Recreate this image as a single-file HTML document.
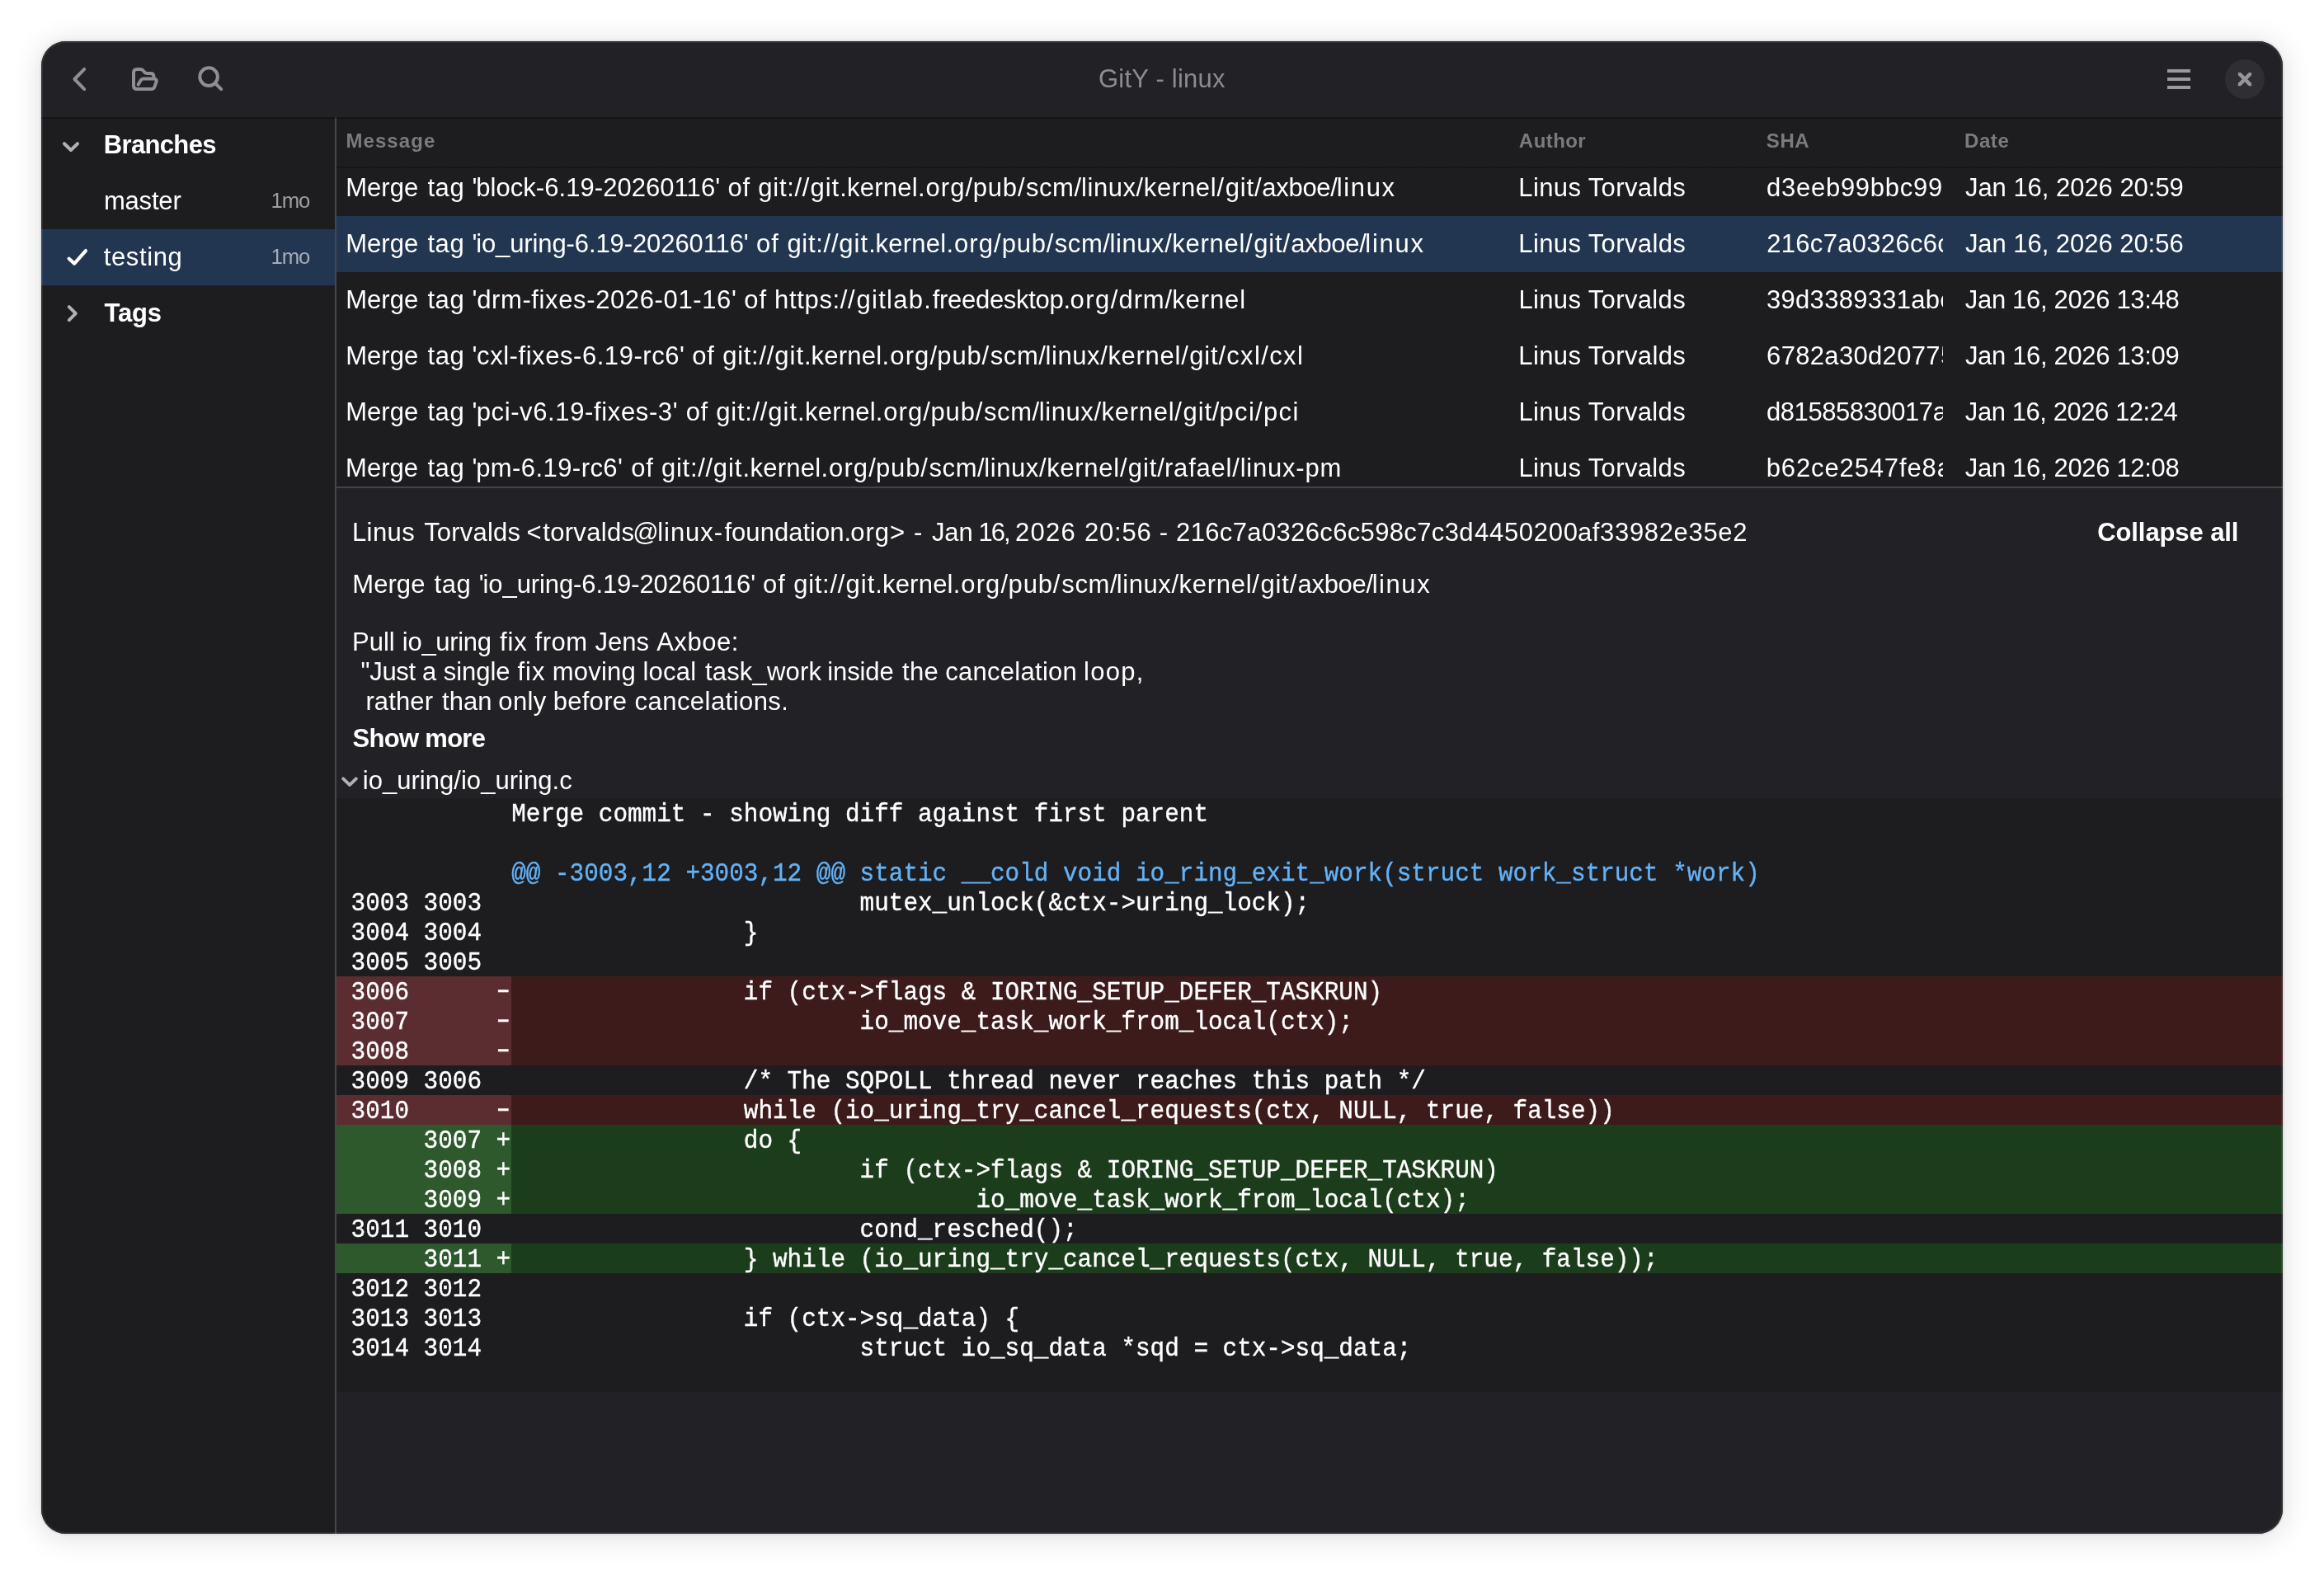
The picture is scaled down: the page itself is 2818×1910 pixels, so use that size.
<!DOCTYPE html>
<html lang="en">
<head>
<meta charset="utf-8">
<title>GitY - linux</title>
<style>
html,body{margin:0;padding:0;}
body{width:2818px;height:1910px;background:#fff;position:relative;overflow:hidden;font-family:'Liberation Sans',sans-serif;}
#win{position:absolute;left:50px;top:50px;width:2718px;height:1810px;background:#222226;}
#shadow{position:absolute;left:50px;top:50px;width:2718px;height:1810px;border-radius:30px;
 box-shadow:0 3px 34px 2px rgba(0,0,0,.13),0 0 0 2px rgba(0,0,0,.05);}
#clipper{position:absolute;left:0;top:0;width:2818px;height:1910px;clip-path:inset(50px 50px 50px 50px round 30px);}
#rim{position:absolute;left:50px;top:50px;width:2718px;height:1810px;border-radius:30px;box-shadow:inset 0 0 0 2px rgba(255,255,255,.07);pointer-events:none;}
.abs{position:absolute;}
#tx{position:absolute;left:0;top:0;width:2818px;height:1910px;will-change:transform;}
.t{position:absolute;white-space:pre;line-height:36px;}
.clip{position:absolute;overflow:hidden;}
#header{position:absolute;left:50px;top:50px;width:2718px;height:92px;background:#222226;}
#sidebar{position:absolute;left:50px;top:142px;width:356px;height:1718px;background:#1d1d20;}
#vsep{position:absolute;left:406px;top:142px;width:2px;height:1718px;background:#47474b;}
#list{position:absolute;left:408px;top:142px;width:2360px;height:448px;background:#1d1d20;}
#hsep{position:absolute;left:408px;top:590px;width:2360px;height:2px;background:#444449;}
#details{position:absolute;left:408px;top:592px;width:2360px;height:1268px;background:#222226;}
.sel{position:absolute;background:#233651;}
.shade{position:absolute;height:3px;background:linear-gradient(rgba(0,0,0,.26),rgba(0,0,0,.26) 66%,rgba(0,0,0,.05) 67%,rgba(0,0,0,.05));}
#diff{position:absolute;left:408px;top:968px;width:2360px;height:720px;background:#1d1d20;font-family:'Liberation Mono',monospace;font-size:29.33px;color:#fff;}
#dtx{will-change:transform;-webkit-text-stroke:0.35px;}
.dl{height:36px;line-height:36px;white-space:pre;position:relative;}
.dl .gb{position:absolute;left:0;top:0;width:212px;height:36px;}
.dl .g{display:inline-block;width:211.2px;height:36px;vertical-align:top;transform:translateY(3px) scaleY(1.1);transform-origin:0 25px;}
.dl .c{display:inline-block;margin-left:1px;height:36px;vertical-align:top;transform:translateY(3px) scaleY(1.1);transform-origin:0 25px;}
.dl.rm{background:#3d1b1a;} .dl.rm .gb{background:#5c2d30;}
.dl.ad{background:#1b3d1b;} .dl.ad .gb{background:#2d592d;}
.dl.hk .c{color:#64b2f5;}
.dl .g b{font-weight:400;display:inline-block;transform:translate(-0.5px,-1.5px) scaleX(1.5);}
svg{position:absolute;overflow:visible;}
</style>
</head>
<body>
<div id="shadow"></div>
<div id="clipper">
<div id="win"></div>
<div id="header"></div>
<div id="sidebar"></div>
<div id="list"></div>
<div id="details"></div>
<div id="vsep"></div>
<div id="hsep"></div>
<!-- selection -->
<div class="sel" style="left:50px;top:278px;width:356px;height:68px"></div>
<div class="sel" style="left:408px;top:262px;width:2360px;height:68px"></div>
<!-- column header strip covers scrolled rows -->
<div class="abs" style="left:408px;top:142px;width:2360px;height:60px;background:#1d1d20"></div>
<div class="shade" style="left:50px;top:142px;width:2718px"></div>
<div class="shade" style="left:408px;top:202px;width:2360px"></div>

<!-- icons -->
<svg id="icons" width="2818" height="1910" viewBox="0 0 2818 1910" style="left:0;top:0" fill="none" stroke-linecap="round" stroke-linejoin="round">
 <g stroke="#8f8f92" stroke-width="4">
  <path d="M102.2 83.9 L90.4 96 L102.2 108.1"/>
  <path d="M167.6 102.6 L170.6 97.4 Q171.8 95.5 174 95.5 L186.6 95.5 Q190.6 95.5 189.6 99.2 L187.4 105.4 Q186.4 108 183.6 108 L166 108 Q162 108 162 104 L162 88 Q162 84 166 84 L170.6 84 Q172 84 173 85 L175.6 87.8 Q176.6 89 178.2 89 L182.6 89 Q186.4 89 186.4 92.6 L186.4 95.4"/>
  <circle cx="253.1" cy="93.1" r="10.8"/>
  <path d="M260.9 100.9 L268.2 108.2"/>
 </g>
 <g stroke="#9a9a9c" stroke-width="4" stroke-linecap="butt">
  <path d="M2628 86 H2656 M2628 96 H2656 M2628 106 H2656"/>
 </g>
 <circle cx="2722" cy="96" r="24" fill="#2f2f33" stroke="none"/>
 <clipPath id="xc"><rect x="2713.8" y="87.9" width="16.3" height="16.3"/></clipPath>
 <path clip-path="url(#xc)" d="M2710 84.1 L2734 108.1 M2734 84.1 L2710 108.1" stroke="#969698" stroke-width="4.6" stroke-linecap="butt"/>
 <!-- sidebar chevrons / check -->
 <path d="M78 174.2 L86 182 L94 174.2" stroke="#b1b1b3" stroke-width="4"/>
 <path d="M83.8 372.2 L91.8 380.2 L83.8 388.2" stroke="#b1b1b3" stroke-width="4"/>
 <path d="M83.7 313.7 L90.2 319.6 L103.9 304.1" stroke="#ffffff" stroke-width="4.2"/>
 <!-- file expander chevron -->
 <path d="M416.2 944.4 L424 951.9 L431.8 944.4" stroke="#b1b1b3" stroke-width="4"/>
</svg>
<div id="tx">
<span class='t' id='t0' style="left:1331.99px;top:78.00px;font-size:31px;letter-spacing:0.223px;color:#8c8c8f;">GitY - linux</span>
<span class='t' id='t1' style="left:125.75px;top:158.00px;font-size:31px;letter-spacing:-0.650px;color:#fff;font-weight:700;">Branches</span>
<span class='t' id='t2' style="left:125.93px;top:226.00px;font-size:31px;letter-spacing:-0.183px;color:#fff;">master</span>
<span class='t' id='t3' style="left:328.59px;top:225.00px;font-size:25.8px;letter-spacing:-1.249px;color:#9d9d9f;">1mo</span>
<span class='t' id='t4' style="left:125.75px;top:294.00px;font-size:31px;letter-spacing:0.607px;color:#fff;">testing</span>
<span class='t' id='t5' style="left:328.59px;top:293.00px;font-size:25.8px;letter-spacing:-1.245px;color:#a7abb3;">1mo</span>
<span class='t' id='t6' style="left:126.62px;top:362.00px;font-size:31px;letter-spacing:-0.254px;color:#fff;font-weight:700;">Tags</span>
<span class='t' id='t7' style="left:419.42px;top:153.00px;font-size:24px;letter-spacing:1.074px;color:#7b7b7d;font-weight:700;">Message</span>
<span class='t' id='t8' style="left:1841.86px;top:153.00px;font-size:24px;letter-spacing:0.440px;color:#7b7b7d;font-weight:700;">Author</span>
<span class='t' id='t9' style="left:2141.82px;top:153.00px;font-size:24px;letter-spacing:0.588px;color:#7b7b7d;font-weight:700;">SHA</span>
<span class='t' id='t10' style="left:2382.10px;top:153.00px;font-size:24px;letter-spacing:0.541px;color:#7b7b7d;font-weight:700;">Date</span>
<div class='t ln' style="left:419.20px;top:210.00px;font-size:31px;color:#fff;"><span class='s' id='t11' style="letter-spacing:0.036px;">Merge </span><span class='s' id='t12' style="letter-spacing:0.612px;margin-left:2.51px;">tag '</span><span class='s' id='t13' style="letter-spacing:0.056px;margin-left:-1.92px;">block-6.19-20260116' </span><span class='s' id='t14' style="letter-spacing:0.810px;margin-left:0.59px;">of </span><span class='s' id='t15' style="letter-spacing:0.718px;margin-left:-0.04px;">git://</span><span class='s' id='t16' style="letter-spacing:1.035px;margin-left:0.23px;">git.</span><span class='s' id='t17' style="letter-spacing:0.236px;margin-left:-0.87px;">kernel.</span><span class='s' id='t18' style="letter-spacing:1.095px;margin-left:0.70px;">org/</span><span class='s' id='t19' style="letter-spacing:0.839px;margin-left:-0.62px;">pub/</span><span class='s' id='t20' style="letter-spacing:0.566px;margin-left:0.63px;">scm/</span><span class='s' id='t21' style="letter-spacing:0.571px;margin-left:-0.71px;">linux/</span><span class='s' id='t22' style="letter-spacing:0.722px;margin-left:-0.14px;">kernel/</span><span class='s' id='t23' style="letter-spacing:0.860px;margin-left:0.91px;">git/</span><span class='s' id='t24' style="letter-spacing:-0.313px;margin-left:-0.12px;">axboe/</span><span class='s' id='t25' style="letter-spacing:1.624px;margin-left:-0.73px;">linux</span></div>
<span class='t' id='t26' style="left:1841.36px;top:210.00px;font-size:31px;letter-spacing:0.369px;color:#fff;">Linus Torvalds</span>
<div class='clip' style='left:2131px;top:210.00px;width:225px;height:36px'><span class='t' id='t27' style="left:11.02px;top:0;font-size:31px;letter-spacing:0.732px;color:#fff;">d3eeb99bbc99<span class='sfx'>e</span></span></div>
<span class='t' id='t28' style="left:2382.91px;top:210.00px;font-size:31px;letter-spacing:-0.031px;color:#fff;">Jan 16, 2026 20:59</span>
<div class='t ln' style="left:419.20px;top:278.00px;font-size:31px;color:#fff;"><span class='s' id='t29' style="letter-spacing:0.036px;">Merge </span><span class='s' id='t30' style="letter-spacing:0.612px;margin-left:2.51px;">tag '</span><span class='s' id='t31' style="letter-spacing:-0.102px;margin-left:-1.96px;">io_uring-6.19-20260116' </span><span class='s' id='t32' style="letter-spacing:0.910px;margin-left:0.96px;">of </span><span class='s' id='t33' style="letter-spacing:0.718px;margin-left:0.10px;">git://</span><span class='s' id='t34' style="letter-spacing:1.035px;margin-left:0.02px;">git.</span><span class='s' id='t35' style="letter-spacing:0.236px;margin-left:-1.26px;">kernel.</span><span class='s' id='t36' style="letter-spacing:1.095px;margin-left:0.75px;">org/</span><span class='s' id='t37' style="letter-spacing:0.839px;margin-left:-0.18px;">pub/</span><span class='s' id='t38' style="letter-spacing:0.566px;margin-left:0.45px;">scm/</span><span class='s' id='t39' style="letter-spacing:0.571px;margin-left:-0.91px;">linux/</span><span class='s' id='t40' style="letter-spacing:0.722px;margin-left:-0.09px;">kernel/</span><span class='s' id='t41' style="letter-spacing:0.860px;margin-left:0.76px;">git/</span><span class='s' id='t42' style="letter-spacing:-0.313px;margin-left:0.33px;">axboe/</span><span class='s' id='t43' style="letter-spacing:1.696px;margin-left:-1.11px;">linux</span></div>
<span class='t' id='t44' style="left:1841.36px;top:278.00px;font-size:31px;letter-spacing:0.369px;color:#fff;">Linus Torvalds</span>
<div class='clip' style='left:2131px;top:278.00px;width:225px;height:36px'><span class='t' id='t45' style="left:11.18px;top:0;font-size:31px;letter-spacing:0.309px;color:#fff;">216c7a0326c6<span class='sfx'>c</span></span></div>
<span class='t' id='t46' style="left:2382.91px;top:278.00px;font-size:31px;letter-spacing:-0.043px;color:#fff;">Jan 16, 2026 20:56</span>
<div class='t ln' style="left:419.20px;top:346.00px;font-size:31px;color:#fff;"><span class='s' id='t47' style="letter-spacing:0.036px;">Merge </span><span class='s' id='t48' style="letter-spacing:0.612px;margin-left:2.51px;">tag '</span><span class='s' id='t49' style="letter-spacing:0.623px;margin-left:-0.95px;">drm-fixes-2026-01-16' </span><span class='s' id='t50' style="letter-spacing:0.944px;margin-left:-0.49px;">of </span><span class='s' id='t51' style="letter-spacing:0.669px;margin-left:-0.57px;">https://</span><span class='s' id='t52' style="letter-spacing:1.309px;margin-left:1.01px;">gitlab.</span><span class='s' id='t53' style="letter-spacing:-0.301px;margin-left:0.47px;">freedesktop.</span><span class='s' id='t54' style="letter-spacing:1.520px;margin-left:-0.39px;">org/</span><span class='s' id='t55' style="letter-spacing:0.850px;margin-left:-0.31px;">drm/</span><span class='s' id='t56' style="letter-spacing:0.870px;margin-left:-0.78px;">kernel</span></div>
<span class='t' id='t57' style="left:1841.38px;top:346.00px;font-size:31px;letter-spacing:0.365px;color:#fff;">Linus Torvalds</span>
<div class='clip' style='left:2131px;top:346.00px;width:225px;height:36px'><span class='t' id='t58' style="left:11.08px;top:0;font-size:31px;letter-spacing:0.271px;color:#fff;">39d3389331ab<span class='sfx'>c</span></span></div>
<span class='t' id='t59' style="left:2382.83px;top:346.00px;font-size:31px;letter-spacing:-0.327px;color:#fff;">Jan 16, 2026 13:48</span>
<div class='t ln' style="left:419.23px;top:414.00px;font-size:31px;color:#fff;"><span class='s' id='t60' style="letter-spacing:0.036px;">Merge </span><span class='s' id='t61' style="letter-spacing:0.612px;margin-left:2.52px;">tag '</span><span class='s' id='t62' style="letter-spacing:0.553px;margin-left:-1.05px;">cxl-fixes-6.19-rc6' </span><span class='s' id='t63' style="letter-spacing:0.710px;margin-left:-0.40px;">of </span><span class='s' id='t64' style="letter-spacing:0.718px;margin-left:0.33px;">git://</span><span class='s' id='t65' style="letter-spacing:1.035px;margin-left:0.12px;">git.</span><span class='s' id='t66' style="letter-spacing:0.236px;margin-left:-1.14px;">kernel.</span><span class='s' id='t67' style="letter-spacing:1.095px;margin-left:1.07px;">org/</span><span class='s' id='t68' style="letter-spacing:0.839px;margin-left:-0.86px;">pub/</span><span class='s' id='t69' style="letter-spacing:0.566px;margin-left:0.78px;">scm/</span><span class='s' id='t70' style="letter-spacing:0.571px;margin-left:-0.96px;">linux/</span><span class='s' id='t71' style="letter-spacing:0.722px;margin-left:0.05px;">kernel/</span><span class='s' id='t72' style="letter-spacing:0.860px;margin-left:0.69px;">git/</span><span class='s' id='t73' style="letter-spacing:1.390px;margin-left:0.16px;">cxl/cxl</span></div>
<span class='t' id='t74' style="left:1841.36px;top:414.00px;font-size:31px;letter-spacing:0.369px;color:#fff;">Linus Torvalds</span>
<div class='clip' style='left:2131px;top:414.00px;width:225px;height:36px'><span class='t' id='t75' style="left:11.10px;top:0;font-size:31px;letter-spacing:0.324px;color:#fff;">6782a30d2077<span class='sfx'>5</span></span></div>
<span class='t' id='t76' style="left:2382.91px;top:414.00px;font-size:31px;letter-spacing:-0.337px;color:#fff;">Jan 16, 2026 13:09</span>
<div class='t ln' style="left:419.20px;top:482.00px;font-size:31px;color:#fff;"><span class='s' id='t77' style="letter-spacing:0.036px;">Merge </span><span class='s' id='t78' style="letter-spacing:0.612px;margin-left:2.51px;">tag '</span><span class='s' id='t79' style="letter-spacing:0.624px;margin-left:-1.41px;">pci-v6.19-fixes-3' </span><span class='s' id='t80' style="letter-spacing:0.744px;margin-left:0.15px;">of </span><span class='s' id='t81' style="letter-spacing:0.718px;margin-left:-0.02px;">git://</span><span class='s' id='t82' style="letter-spacing:1.035px;margin-left:0.07px;">git.</span><span class='s' id='t83' style="letter-spacing:0.236px;margin-left:-0.81px;">kernel.</span><span class='s' id='t84' style="letter-spacing:1.095px;margin-left:0.60px;">org/</span><span class='s' id='t85' style="letter-spacing:0.839px;margin-left:-0.60px;">pub/</span><span class='s' id='t86' style="letter-spacing:0.566px;margin-left:0.82px;">scm/</span><span class='s' id='t87' style="letter-spacing:0.571px;margin-left:-0.95px;">linux/</span><span class='s' id='t88' style="letter-spacing:0.722px;margin-left:-0.09px;">kernel/</span><span class='s' id='t89' style="letter-spacing:0.860px;margin-left:0.94px;">git/</span><span class='s' id='t90' style="letter-spacing:1.307px;margin-left:-0.78px;">pci/pci</span></div>
<span class='t' id='t91' style="left:1841.47px;top:482.00px;font-size:31px;letter-spacing:0.354px;color:#fff;">Linus Torvalds</span>
<div class='clip' style='left:2131px;top:482.00px;width:225px;height:36px'><span class='t' id='t92' style="left:10.99px;top:0;font-size:31px;letter-spacing:-0.436px;color:#fff;">d81585830017<span class='sfx'>a</span></span></div>
<span class='t' id='t93' style="left:2382.86px;top:482.00px;font-size:31px;letter-spacing:-0.440px;color:#fff;">Jan 16, 2026 12:24</span>
<div class='t ln' style="left:419.07px;top:550.00px;font-size:31px;color:#fff;"><span class='s' id='t94' style="letter-spacing:0.036px;">Merge </span><span class='s' id='t95' style="letter-spacing:0.612px;margin-left:2.62px;">tag '</span><span class='s' id='t96' style="letter-spacing:0.428px;margin-left:-1.91px;">pm-6.19-rc6' </span><span class='s' id='t97' style="letter-spacing:0.744px;margin-left:0.84px;">of </span><span class='s' id='t98' style="letter-spacing:0.718px;margin-left:0.09px;">git://</span><span class='s' id='t99' style="letter-spacing:1.035px;margin-left:-0.22px;">git.</span><span class='s' id='t100' style="letter-spacing:0.236px;margin-left:-0.58px;">kernel.</span><span class='s' id='t101' style="letter-spacing:1.095px;margin-left:0.83px;">org/</span><span class='s' id='t102' style="letter-spacing:0.839px;margin-left:-0.95px;">pub/</span><span class='s' id='t103' style="letter-spacing:0.566px;margin-left:0.87px;">scm/</span><span class='s' id='t104' style="letter-spacing:0.571px;margin-left:-0.95px;">linux/</span><span class='s' id='t105' style="letter-spacing:0.722px;margin-left:0.02px;">kernel/</span><span class='s' id='t106' style="letter-spacing:0.860px;margin-left:0.59px;">git/</span><span class='s' id='t107' style="letter-spacing:0.781px;margin-left:-0.60px;">rafael/linux-pm</span></div>
<span class='t' id='t108' style="left:1841.38px;top:550.00px;font-size:31px;letter-spacing:0.365px;color:#fff;">Linus Torvalds</span>
<div class='clip' style='left:2131px;top:550.00px;width:225px;height:36px'><span class='t' id='t109' style="left:10.76px;top:0;font-size:31px;letter-spacing:0.867px;color:#fff;">b62ce2547fe8<span class='sfx'>a</span></span></div>
<span class='t' id='t110' style="left:2382.83px;top:550.00px;font-size:31px;letter-spacing:-0.327px;color:#fff;">Jan 16, 2026 12:08</span>
<div class='t ln' style="left:426.97px;top:628.00px;font-size:31px;color:#fff;"><span class='s' id='t111' style="letter-spacing:0.394px;">Linus </span><span class='s' id='t112' style="letter-spacing:0.195px;margin-left:2.11px;">Torvalds </span><span class='s' id='t113' style="letter-spacing:0.391px;margin-left:-1.44px;">&lt;</span><span class='s' id='t114' style="letter-spacing:0.307px;margin-left:1.21px;">torvalds</span><span class='s' id='t115' style="letter-spacing:-1.884px;margin-left:-2.10px;">@</span><span class='s' id='t116' style="letter-spacing:0.918px;margin-left:0.53px;">linux-</span><span class='s' id='t117' style="letter-spacing:0.016px;margin-left:1.61px;">foundation.</span><span class='s' id='t118' style="letter-spacing:1.014px;margin-left:-0.83px;">org&gt; </span><span class='s' id='t119' style="letter-spacing:1.281px;margin-left:0.20px;">- </span><span class='s' id='t120' style="letter-spacing:-0.127px;margin-left:0.39px;">Jan </span><span class='s' id='t121' style="letter-spacing:-2.005px;margin-left:-1.57px;">16, </span><span class='s' id='t122' style="letter-spacing:1.264px;margin-left:0.99px;">2026 </span><span class='s' id='t123' style="letter-spacing:0.733px;margin-left:0.10px;">20:56 </span><span class='s' id='t124' style="letter-spacing:0.731px;margin-left:-0.07px;">- </span><span class='s' id='t125' style="letter-spacing:0.354px;margin-left:0.04px;">216c7a0326c6c598c7c3d</span><span class='s' id='t126' style="letter-spacing:0.745px;margin-left:1.04px;">4450200</span><span class='s' id='t127' style="letter-spacing:0.660px;margin-left:-0.89px;">af33982e35e2</span></div>
<span class='t' id='t128' style="left:2543.23px;top:628.00px;font-size:31px;letter-spacing:-0.098px;color:#fff;font-weight:700;">Collapse all</span>
<div class='t ln' style="left:427.37px;top:691.00px;font-size:31px;color:#fff;"><span class='s' id='t129' style="letter-spacing:0.036px;">Merge </span><span class='s' id='t130' style="letter-spacing:0.612px;margin-left:2.47px;">tag '</span><span class='s' id='t131' style="letter-spacing:-0.102px;margin-left:-1.66px;">io_uring-6.19-20260116' </span><span class='s' id='t132' style="letter-spacing:0.910px;margin-left:0.46px;">of </span><span class='s' id='t133' style="letter-spacing:0.718px;margin-left:-0.02px;">git://</span><span class='s' id='t134' style="letter-spacing:1.035px;margin-left:0.36px;">git.</span><span class='s' id='t135' style="letter-spacing:0.236px;margin-left:-1.07px;">kernel.</span><span class='s' id='t136' style="letter-spacing:1.095px;margin-left:0.73px;">org/</span><span class='s' id='t137' style="letter-spacing:0.839px;margin-left:-0.55px;">pub/</span><span class='s' id='t138' style="letter-spacing:0.566px;margin-left:1.09px;">scm/</span><span class='s' id='t139' style="letter-spacing:0.571px;margin-left:-1.28px;">linux/</span><span class='s' id='t140' style="letter-spacing:0.722px;">kernel/</span><span class='s' id='t141' style="letter-spacing:0.860px;margin-left:0.79px;">git/</span><span class='s' id='t142' style="letter-spacing:-0.313px;margin-left:0.30px;">axboe/</span><span class='s' id='t143' style="letter-spacing:1.560px;margin-left:-1.11px;">linux</span></div>
<div class='t ln' style="left:426.99px;top:761.00px;font-size:31px;color:#fff;"><span class='s' id='t144' style="letter-spacing:-0.003px;">Pull </span><span class='s' id='t145' style="letter-spacing:-0.302px;margin-left:0.58px;">io_uring </span><span class='s' id='t146' style="letter-spacing:0.794px;margin-left:2.00px;">fix </span><span class='s' id='t147' style="letter-spacing:0.515px;margin-left:-0.37px;">from </span><span class='s' id='t148' style="letter-spacing:0.058px;margin-left:-0.32px;">Jens </span><span class='s' id='t149' style="letter-spacing:0.544px;margin-left:0.35px;">Axboe:</span></div>
<div class='t ln' style="left:437.48px;top:797.00px;font-size:31px;color:#fff;"><span class='s' id='t150' style="letter-spacing:-0.297px;">"Just </span><span class='s' id='t151' style="letter-spacing:-0.430px;margin-left:-0.25px;">a </span><span class='s' id='t152' style="letter-spacing:-0.030px;margin-left:0.78px;">single </span><span class='s' id='t153' style="letter-spacing:1.019px;margin-left:0.33px;">fix </span><span class='s' id='t154' style="letter-spacing:0.193px;margin-left:-1.33px;">moving </span><span class='s' id='t155' style="letter-spacing:0.238px;margin-left:-0.33px;">local </span><span class='s' id='t156' style="letter-spacing:0.183px;margin-left:1.80px;">task_work </span><span class='s' id='t157' style="letter-spacing:-0.116px;margin-left:-1.67px;">inside </span><span class='s' id='t158' style="letter-spacing:0.370px;margin-left:1.89px;">the </span><span class='s' id='t159' style="letter-spacing:0.279px;margin-left:-0.98px;">cancelation </span><span class='s' id='t160' style="letter-spacing:1.258px;margin-left:-1.02px;">loop,</span></div>
<div class='t ln' style="left:443.43px;top:833.00px;font-size:31px;color:#fff;"><span class='s' id='t161' style="letter-spacing:0.113px;">rather </span><span class='s' id='t162' style="letter-spacing:0.049px;margin-left:2.17px;">than </span><span class='s' id='t163' style="letter-spacing:0.343px;margin-left:-0.88px;">only </span><span class='s' id='t164' style="letter-spacing:0.283px;margin-left:-0.84px;">before </span><span class='s' id='t165' style="letter-spacing:0.446px;margin-left:0.44px;">cancelations.</span></div>
<span class='t' id='t166' style="left:427.51px;top:878.00px;font-size:31px;letter-spacing:-0.701px;color:#fff;font-weight:700;">Show more</span>
<span class='t' id='t167' style="left:439.72px;top:929.00px;font-size:31px;letter-spacing:0.034px;color:#fff;">io_uring/io_uring.c</span>
</div>
<div id="diff"><div id="dtx">
<div class='dl'><i class='gb'></i><span class='g'>            </span><span class='c'>Merge commit - showing diff against first parent</span></div>
<div class='dl'><i class='gb'></i><span class='g'>            </span><span class='c'></span></div>
<div class='dl hk'><i class='gb'></i><span class='g'>            </span><span class='c'>@@ -3003,12 +3003,12 @@ static __cold void io_ring_exit_work(struct work_struct *work)</span></div>
<div class='dl'><i class='gb'></i><span class='g'> 3003 3003  </span><span class='c'>                        mutex_unlock(&amp;ctx-&gt;uring_lock);</span></div>
<div class='dl'><i class='gb'></i><span class='g'> 3004 3004  </span><span class='c'>                }</span></div>
<div class='dl'><i class='gb'></i><span class='g'> 3005 3005  </span><span class='c'></span></div>
<div class='dl rm'><i class='gb'></i><span class='g'> 3006      <b>-</b></span><span class='c'>                if (ctx-&gt;flags &amp; IORING_SETUP_DEFER_TASKRUN)</span></div>
<div class='dl rm'><i class='gb'></i><span class='g'> 3007      <b>-</b></span><span class='c'>                        io_move_task_work_from_local(ctx);</span></div>
<div class='dl rm'><i class='gb'></i><span class='g'> 3008      <b>-</b></span><span class='c'></span></div>
<div class='dl'><i class='gb'></i><span class='g'> 3009 3006  </span><span class='c'>                /* The SQPOLL thread never reaches this path */</span></div>
<div class='dl rm'><i class='gb'></i><span class='g'> 3010      <b>-</b></span><span class='c'>                while (io_uring_try_cancel_requests(ctx, NULL, true, false))</span></div>
<div class='dl ad'><i class='gb'></i><span class='g'>      3007 +</span><span class='c'>                do {</span></div>
<div class='dl ad'><i class='gb'></i><span class='g'>      3008 +</span><span class='c'>                        if (ctx-&gt;flags &amp; IORING_SETUP_DEFER_TASKRUN)</span></div>
<div class='dl ad'><i class='gb'></i><span class='g'>      3009 +</span><span class='c'>                                io_move_task_work_from_local(ctx);</span></div>
<div class='dl'><i class='gb'></i><span class='g'> 3011 3010  </span><span class='c'>                        cond_resched();</span></div>
<div class='dl ad'><i class='gb'></i><span class='g'>      3011 +</span><span class='c'>                } while (io_uring_try_cancel_requests(ctx, NULL, true, false));</span></div>
<div class='dl'><i class='gb'></i><span class='g'> 3012 3012  </span><span class='c'></span></div>
<div class='dl'><i class='gb'></i><span class='g'> 3013 3013  </span><span class='c'>                if (ctx-&gt;sq_data) {</span></div>
<div class='dl'><i class='gb'></i><span class='g'> 3014 3014  </span><span class='c'>                        struct io_sq_data *sqd = ctx-&gt;sq_data;</span></div>
<div class='dl'><i class='gb'></i><span class='g'>            </span><span class='c'></span></div>
</div></div>
<div id="rim"></div>
</div>
</body>
</html>
